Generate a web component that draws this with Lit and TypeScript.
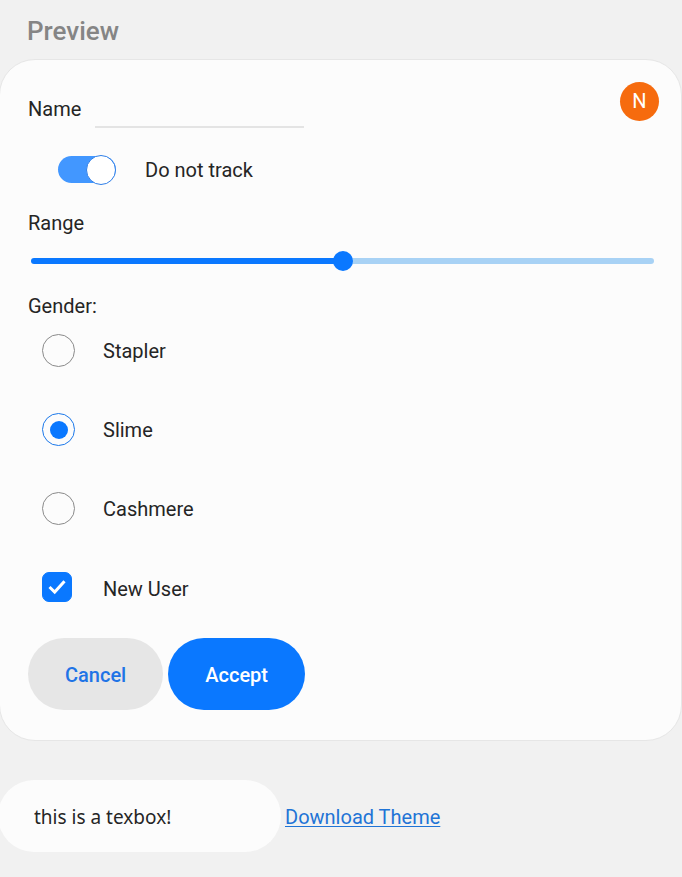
import { LitElement, html, css } from "lit";
import { customElement, state } from "lit/decorators.js";

const MATERIALS = ["Stapler", "Slime", "Cashmere"];

@customElement("app-root")
export class AppRoot extends LitElement {
  @state() private level = 50;

  static styles = css`
    :host {
      --accent: #0a78ff;
      --text: #252525;
      --surface: #fcfcfc;
      display: block;
      box-sizing: border-box;
      min-height: 100vh;
      overflow: hidden;
      background: #f1f1f1;
      color: var(--text);
      font: 20px/24px Roboto, "Liberation Sans", sans-serif;
    }
    *,
    *::before {
      box-sizing: border-box;
    }
    input,
    button {
      margin: 0;
      font: inherit;
      color: inherit;
    }
    h1 {
      margin: 0;
      padding: 15px 27px 12px;
      font-size: 26px;
      line-height: 32px;
      font-weight: 500;
      color: #858585;
    }
    .card {
      position: relative;
      display: flex;
      flex-direction: column;
      margin-left: -1px;
      padding: 30px 27px 30px 28px;
      border: 1px solid #e6e6e6;
      border-radius: 36px;
      background: var(--surface);
    }
    .avatar {
      position: absolute;
      top: 22px;
      right: 22px;
      width: 39px;
      height: 39px;
      border-radius: 50%;
      background: #f66b0e;
      color: #fff;
      line-height: 39px;
      text-align: center;
    }
    .name {
      display: flex;
      align-items: center;
      gap: 14px;
    }
    .name input {
      width: 209px;
      height: 38px;
      padding: 0;
      border: 0;
      border-bottom: 2px solid #e4e4e4;
      background: none;
      outline: none;
    }
    .switch {
      display: flex;
      align-items: center;
      gap: 29px;
      align-self: flex-start;
      height: 31px;
      margin: 26px 0 0 30px;
    }
    .switch input {
      appearance: none;
      display: flex;
      align-items: center;
      width: 58px;
      height: 27px;
      border-radius: 15px;
      background: #bbb;
    }
    .switch input:checked {
      justify-content: flex-end;
      background: #4297ff;
    }
    .switch input::before {
      content: "";
      flex: none;
      width: 30px;
      height: 30px;
      border: 1px solid #2f7fe8;
      border-radius: 50%;
      background: #fff;
    }
    .range-label {
      margin-top: 26px;
    }
    .range {
      appearance: none;
      height: 20px;
      margin: 16px 0 0 3px;
      background: none;
    }
    .range::-webkit-slider-runnable-track {
      height: 6px;
      border-radius: 3px;
      background: linear-gradient(
        to right,
        var(--accent) var(--level),
        #a8d2f5 var(--level)
      );
    }
    .range::-webkit-slider-thumb {
      appearance: none;
      width: 20px;
      height: 20px;
      margin-top: -7px;
      border-radius: 50%;
      background: var(--accent);
    }
    fieldset {
      display: flex;
      flex-direction: column;
      align-items: flex-start;
      gap: 46px;
      margin: 23px 0 0;
      padding: 0;
      border: 0;
    }
    legend {
      padding: 0 0 16px;
    }
    .option {
      display: flex;
      align-items: center;
      align-self: flex-start;
      height: 33px;
      margin-left: 14px;
    }
    .option input {
      appearance: none;
      display: grid;
      place-items: center;
      width: 33px;
      height: 33px;
      margin-right: 28px;
      border: 1px solid #8a8a8a;
      border-radius: 50%;
    }
    .option input:checked {
      border-color: #1b78ea;
    }
    .option input:checked::before {
      content: "";
      width: 18px;
      height: 18px;
      border-radius: 50%;
      background: var(--accent);
    }
    .option.check {
      align-items: flex-start;
      margin-top: 47px;
      line-height: 34px;
    }
    .tick {
      display: grid;
      margin-right: 31px;
    }
    .tick > * {
      grid-area: 1 / 1;
    }
    .tick input {
      width: 30px;
      height: 30px;
      margin: 0;
      border-radius: 7px;
    }
    .tick input:checked {
      border-color: var(--accent);
      background: var(--accent);
    }
    .tick input:checked::before {
      content: none;
    }
    .tick svg {
      width: 30px;
      height: 30px;
      fill: none;
      stroke: #fff;
      stroke-width: 3;
      pointer-events: none;
      visibility: hidden;
    }
    .tick input:checked + svg {
      visibility: visible;
    }
    .actions {
      display: flex;
      gap: 5px;
      margin-top: 33px;
    }
    button {
      height: 72px;
      padding: 2px 37px 0;
      border: 0;
      border-radius: 36px;
      background: #e6e6e6;
      color: #1f74e6;
      font-weight: 500;
    }
    .primary {
      background: var(--accent);
      color: #fff;
    }
    .footer {
      display: flex;
      align-items: baseline;
      gap: 4px;
      margin: 39px 0 25px -2px;
    }
    .footer input {
      width: 283px;
      height: 72px;
      padding: 2px 36px 0;
      border: 0;
      border-radius: 36px;
      outline: none;
      background: var(--surface);
      font-family: "Noto Sans", sans-serif;
      font-size: 19px;
    }
    a {
      color: #1f74d6;
      text-underline-offset: 2px;
      text-decoration-thickness: 1px;
    }
  `;

  private onLevel(event: Event) {
    this.level = Number((event.target as HTMLInputElement).value);
  }

  render() {
    return html`
      <h1>Preview</h1>
      <form class="card" @submit=${(e: Event) => e.preventDefault()}>
        <span class="avatar">N</span>
        <div class="name">
          <label for="name">Name</label>
          <input id="name" type="text" />
        </div>
        <label class="switch">
          <input type="checkbox" role="switch" checked />
          Do not track
        </label>
        <label class="range-label" for="range">Range</label>
        <input
          class="range"
          id="range"
          type="range"
          .value=${String(this.level)}
          style="--level: ${this.level}%"
          @input=${this.onLevel}
        />
        <fieldset>
          <legend>Gender:</legend>
          ${MATERIALS.map(
            (name) => html`
              <label class="option">
                <input type="radio" name="gender" value=${name} ?checked=${name === "Slime"} />
                ${name}
              </label>
            `
          )}
        </fieldset>
        <label class="option check">
          <span class="tick">
            <input type="checkbox" checked />
            <svg viewBox="0 0 30 30" aria-hidden="true">
              <path d="M7.5 15 L12.7 20 L22.5 9.3" />
            </svg>
          </span>
          New User
        </label>
        <div class="actions">
          <button type="button">Cancel</button>
          <button class="primary" type="submit">Accept</button>
        </div>
      </form>
      <div class="footer">
        <input type="text" aria-label="Text box" value="this is a texbox!" />
        <a href="#theme">Download Theme</a>
      </div>
    `;
  }
}
